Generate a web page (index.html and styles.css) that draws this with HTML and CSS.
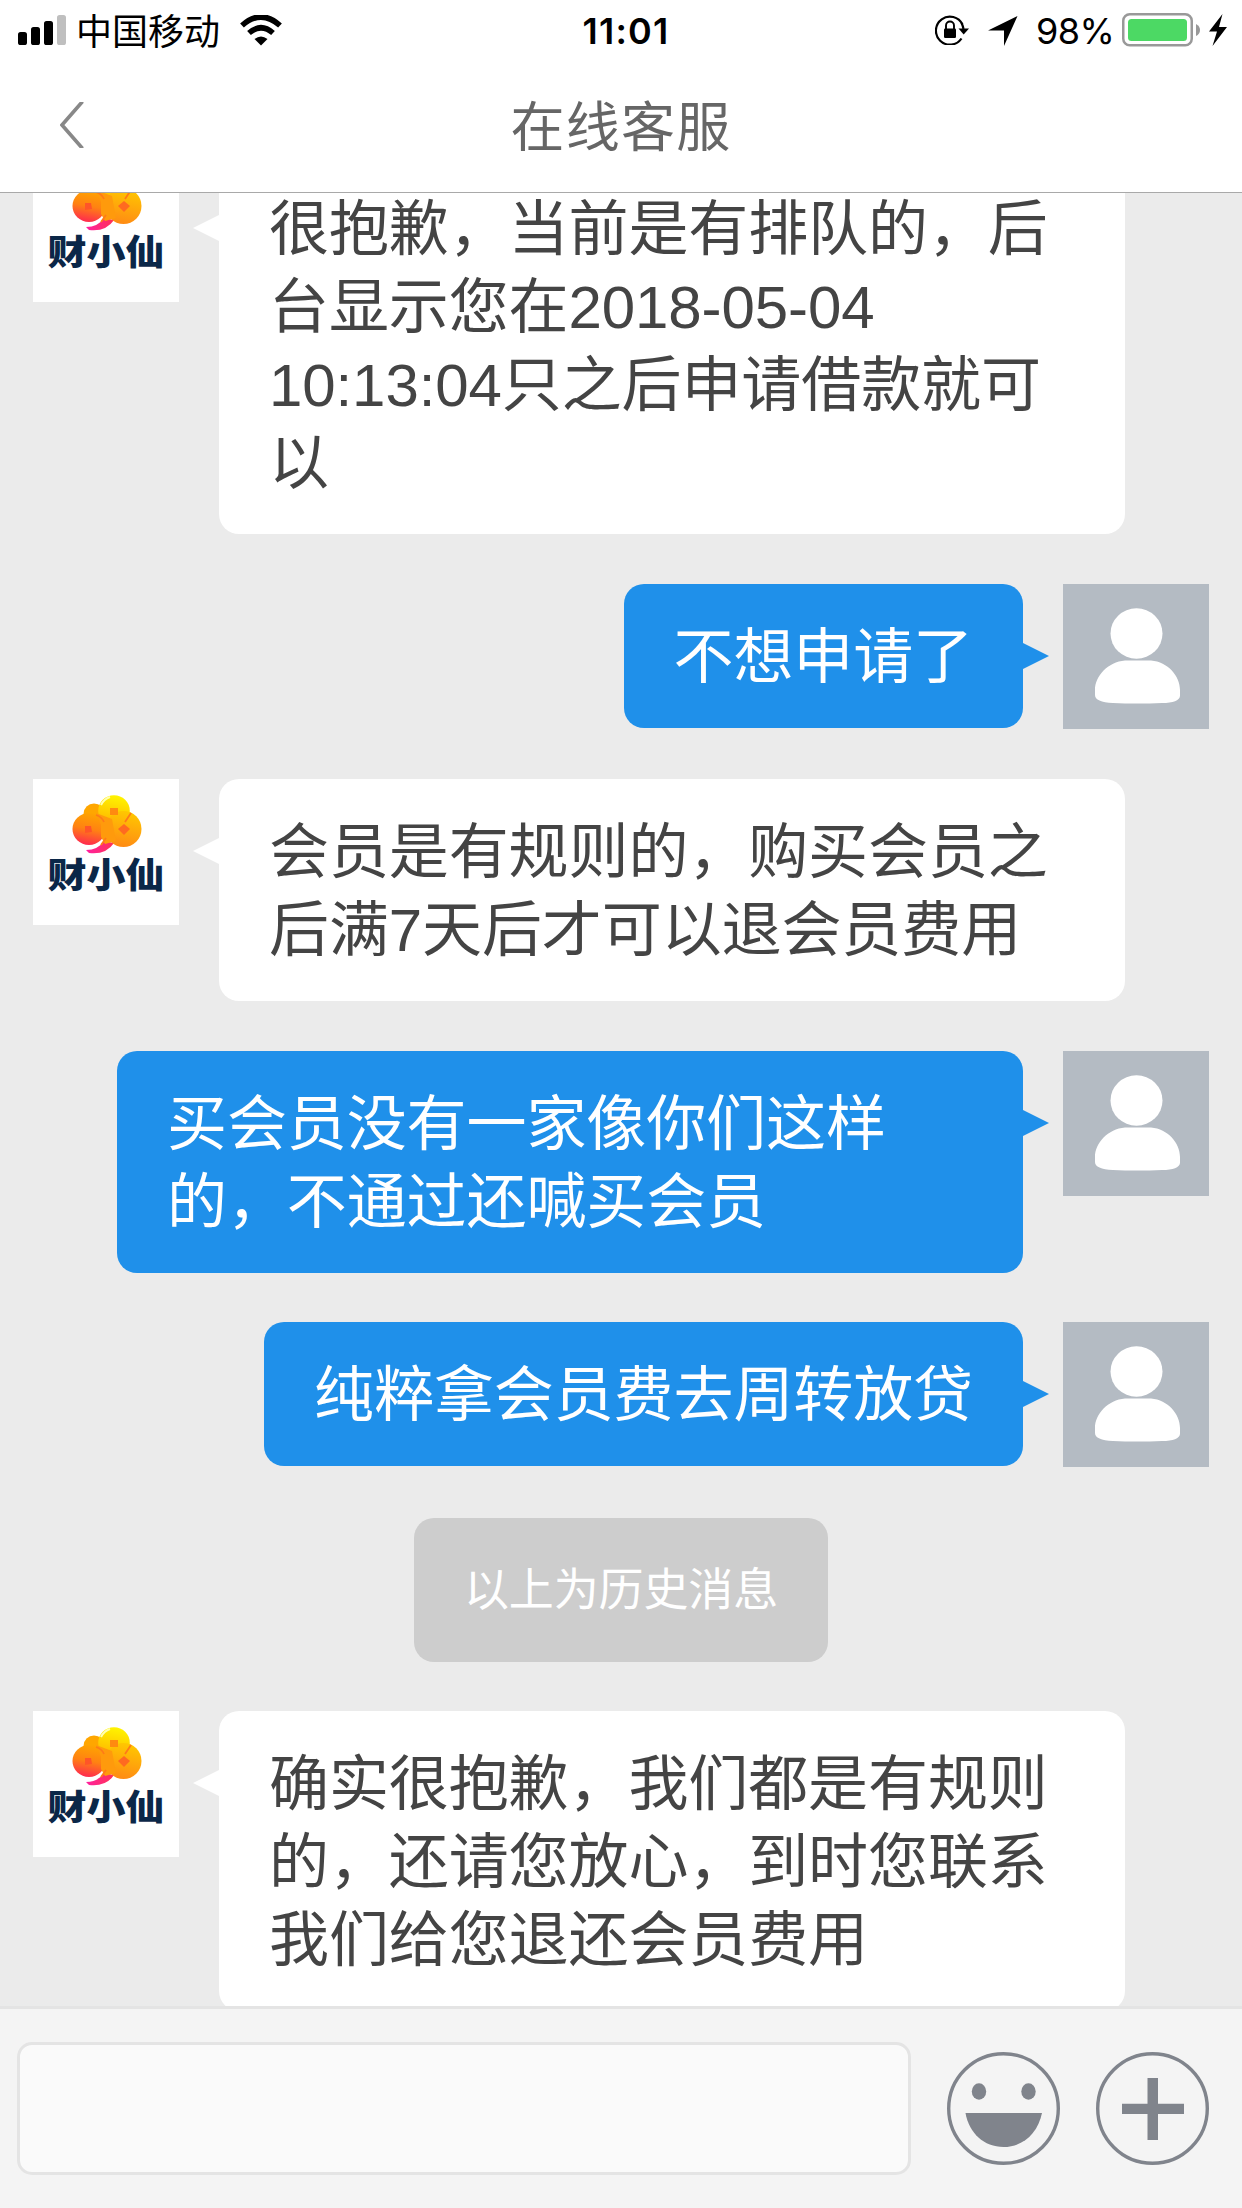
FILE: index.html
```html
<!DOCTYPE html>
<html lang="zh-CN">
<head>
<meta charset="utf-8">
<title>在线客服</title>
<link rel="stylesheet" href="styles.css">
</head>
<body>
<svg class="defs" aria-hidden="true">
  <defs>
    <linearGradient id="tail" x1="0" y1="0" x2="1" y2="0">
      <stop offset="0" stop-color="#ff1fa0"/>
      <stop offset="1" stop-color="#ff3355"/>
    </linearGradient>
    <linearGradient id="puff-left" x1="0.6" y1="0" x2="0.4" y2="1">
      <stop offset="0" stop-color="#ffa500"/>
      <stop offset="0.5" stop-color="#ff8212"/>
      <stop offset="1" stop-color="#ff2850"/>
    </linearGradient>
    <linearGradient id="puff-right" x1="0.6" y1="0" x2="0.4" y2="1">
      <stop offset="0" stop-color="#ffc800"/>
      <stop offset="1" stop-color="#ff8a14"/>
    </linearGradient>
    <linearGradient id="puff-top" x1="0.6" y1="0" x2="0.4" y2="1">
      <stop offset="0" stop-color="#fff500"/>
      <stop offset="1" stop-color="#ffb000"/>
    </linearGradient>
    <symbol id="cloud" viewBox="0 0 70 59">
      <path d="M14 55Q26 55 32 46L42 48Q34 60 17 58Z" fill="url(#tail)"/>
      <circle cx="22" cy="19" r="10.500" fill="#ffa600"/>
      <circle cx="42" cy="16" r="15.800" fill="url(#puff-top)"/>
      <circle cx="51.500" cy="34" r="18" fill="url(#puff-right)"/>
      <ellipse cx="17" cy="34" rx="16.500" ry="16" fill="url(#puff-left)"/>
      <path d="M24 18L40 24L44 46L33 49L29 42V30Z" fill="#ff9a0c"/>
      <path d="M24 20Q30 22 32 27M59 18L53 27M34 43L29 50" fill="none" stroke="#ff7a18" stroke-width="1.800"/>
      <path d="M29 10Q32 4 38 2" fill="none" stroke="#ffffb0" stroke-width="2"/>
      <path d="M38 13H46V20H38Z" fill="#ff8a10"/>
      <path d="M46 34L52 29L58 34L52 40Z" fill="#ff6a20"/>
      <path d="M13 31L19 31L20 37L13 38Z" fill="#ff5528"/>
    </symbol>
    <symbol id="person" viewBox="0 0 146 145">
      <ellipse cx="73.500" cy="49.500" rx="26" ry="25.200" fill="#fff"/>
      <path d="M62 76.500H88C105 78 117 92 117 106V112Q116 119 99 119Q74 120 50 119Q32 118 32 111V106C32 92 45 78 62 76.500Z" fill="#fff"/>
    </symbol>
  </defs>
</svg>
<main class="screen">
  <div class="status">
    <div class="status-left">
      <svg class="signal" width="48" height="30" viewBox="0 0 48 30">
        <rect x="0" y="17" width="9" height="13" rx="2.600"/>
        <rect x="13" y="12" width="9" height="18" rx="2.600"/>
        <rect x="26" y="6" width="9" height="24" rx="2.600"/>
        <rect x="39" y="0" width="9" height="30" rx="2.600" fill="#bfbfbf"/>
      </svg>
      <span class="carrier">中国移动</span>
      <svg class="wifi" width="42" height="31" viewBox="0 0 42 31">
        <path d="M2 10.500Q21 -6.500 40 10.500M9 18Q21 7.500 33 18" fill="none" stroke="#000" stroke-width="5.600"/>
        <path d="M14.500 24Q21 19 27.500 24L21 30.500Z"/>
      </svg>
    </div>
    <div class="time">11:01</div>
    <div class="status-right">
      <svg class="lock" width="34" height="30" viewBox="0 0 34 30">
        <path d="M27.500 9.500A14 14 0 1 0 26.500 23.500" fill="none" stroke="#000" stroke-width="2.200"/>
        <path d="M23.500 13.500H34L28.700 19.500Z"/>
        <path d="M28.500 14Q28 11 26.500 8" fill="none" stroke="#000" stroke-width="2.200"/>
        <rect x="9" y="13.500" width="12" height="9.500" rx="1.200"/>
        <path d="M11 14.500V10.500a4 4 0 0 1 8 0V14.500" fill="none" stroke="#000" stroke-width="1.900"/>
      </svg>
      <svg class="arrow" width="30" height="30" viewBox="0 0 30 30"><path d="M29.500 0L16 30V14.500H0Z"/></svg>
      <span class="percent">98%</span>
      <svg class="battery" width="79" height="34" viewBox="0 0 79 34">
        <rect x="1.250" y="1.250" width="68.500" height="31" rx="6.500" fill="none" stroke="#999" stroke-width="2.500"/>
        <rect x="6" y="6" width="59" height="22" rx="3.500" fill="#4cd964"/>
        <path d="M74 11Q78 13 78 17T74 23Z" fill="#999"/>
      </svg>
      <svg class="bolt" width="18" height="32" viewBox="0 0 18 32"><path d="M13.500 0L0 17.500H8L3.500 32L18 13H10Z"/></svg>
    </div>
  </div>
  <header class="nav">
    <svg class="back" width="24" height="46" viewBox="0 0 24 46"><path d="M22.500 -0.500L2 23L22.500 46.500" fill="none" stroke="#888" stroke-width="3.600"/></svg>
    <h1 class="title">在线客服</h1>
  </header>
  <section class="chat">
    <div class="row">
      <div class="avatar brand"><svg class="cloud" width="70" height="59"><use href="#cloud"/></svg><span class="brand-name">财小仙</span></div>
      <p class="bubble">很抱歉，当前是有排队的，后<br>台显示您在2018-05-04<br>10:13:04只之后申请借款就可<br>以</p>
    </div>
    <div class="row mine">
      <p class="bubble">不想申请了</p>
      <svg class="avatar user"><use href="#person"/></svg>
    </div>
    <div class="row">
      <div class="avatar brand"><svg class="cloud" width="70" height="59"><use href="#cloud"/></svg><span class="brand-name">财小仙</span></div>
      <p class="bubble">会员是有规则的，购买会员之<br>后满7天后才可以退会员费用</p>
    </div>
    <div class="row mine">
      <p class="bubble wide">买会员没有一家像你们这样<br>的，不通过还喊买会员</p>
      <svg class="avatar user"><use href="#person"/></svg>
    </div>
    <div class="row mine last-sent">
      <p class="bubble">纯粹拿会员费去周转放贷</p>
      <svg class="avatar user"><use href="#person"/></svg>
    </div>
    <div class="notice">以上为历史消息</div>
    <div class="row">
      <div class="avatar brand"><svg class="cloud" width="70" height="59"><use href="#cloud"/></svg><span class="brand-name">财小仙</span></div>
      <p class="bubble">确实很抱歉，我们都是有规则<br>的，还请您放心，到时您联系<br>我们给您退还会员费用</p>
    </div>
  </section>
  <footer class="composer">
    <div class="input"></div>
    <svg class="smile" width="113" height="113" viewBox="0 0 113 113">
      <circle cx="56.500" cy="56.500" r="54.800" fill="none" stroke="#80848c" stroke-width="3.400"/>
      <ellipse cx="32" cy="39.500" rx="7.200" ry="8.200" fill="#80848c"/>
      <ellipse cx="81.500" cy="39.500" rx="7.200" ry="8.200" fill="#80848c"/>
      <path d="M18.500 61H95C91 81 76 95 56.500 95S22 81 18.500 61Z" fill="#80848c"/>
    </svg>
    <svg class="plus" width="113" height="113" viewBox="0 0 113 113">
      <circle cx="56.500" cy="56.500" r="54.800" fill="none" stroke="#80848c" stroke-width="3.400"/>
      <path d="M51.500 26H62V51.700H88V62H62V88H51.500V62H26V51.700H51.500Z" fill="#80848c"/>
    </svg>
  </footer>
</main>
</body>
</html>
```
FILE: styles.css
```css
* { box-sizing: border-box; }

body {
  margin: 0;
  font-family: "Liberation Sans", "Noto Sans CJK SC", sans-serif;
}

svg { display: block; flex: none; }

.defs { position: absolute; width: 0; height: 0; }

.screen {
  display: flex;
  flex-direction: column;
  width: 1242px;
  height: 2208px;
  overflow: hidden;
  background: #ebebeb;
}

/* status bar */
.status {
  display: grid;
  grid-template-columns: 1fr auto 1fr;
  flex: none;
  height: 60px;
  background: #fff;
  font-family: "Inter", "Noto Sans CJK SC", sans-serif;
  font-size: 36px;
  line-height: 60px;
  color: #000;
}

.status-left, .status-right { display: flex; }
.status-left { padding-left: 18px; }
.status-right { justify-content: flex-end; padding-right: 15px; }
.signal { margin-top: 15px; }
.carrier { margin: 2px 0 0 10px; width: 146px; white-space: nowrap; }
.wifi { margin: 15px 0 0 18px; }
.time { padding-left: 10px; margin-top: 1px; font-weight: 600; letter-spacing: 1.2px; }
.lock { margin: 15px 19px 0 0; }
.arrow { margin: 16px 18px 0 0; }
.percent { width: 77px; margin: 1px 9px 0 0; letter-spacing: -0.6px; white-space: nowrap; }
.battery { margin: 13px 8px 0 0; }
.bolt { margin-top: 14px; }

/* title bar */
.nav {
  display: grid;
  grid-template-columns: 1fr auto 1fr;
  flex: none;
  height: 133px;
  background: #fff;
  border-bottom: 1px solid #a9a9a9;
}

.back { margin: 42px 0 0 60px; }

.title {
  margin: 28px 0 0;
  font-size: 54px;
  line-height: 80px;
  font-weight: 400;
  letter-spacing: 1.3px;
  color: #666;
}

/* conversation, scrolled so that its first message runs under the title bar */
.chat {
  display: flex;
  flex: 1;
  flex-direction: column;
  justify-content: flex-start;
  gap: 50px;
  min-height: 0;
  padding: 0 33px;
  overflow: hidden;
}

.chat > .row:first-child { margin-top: -37px; }

.row {
  display: flex;
  flex: none;
  align-items: flex-start;
  gap: 40px;
  min-height: 145px;
}

.mine { justify-content: flex-end; }
.chat > .last-sent { min-height: 146px; margin-top: -1px; }

.bubble {
  position: relative;
  width: 906px;
  margin: 0;
  padding: 35px 50px 31px;
  border-radius: 20px;
  background: #fff;
  color: #444;
  font-size: 60px;
  line-height: 78px;
  letter-spacing: -0.1px;
  white-space: nowrap;
}

.bubble::before {
  content: "";
  position: absolute;
  top: 59px;
  left: -26px;
  border: solid transparent;
  border-width: 13px 26px 13px 0;
  border-right-color: #fff;
}

.mine .bubble { width: auto; background: #1f90ea; color: #fff; }
.mine .wide { width: 906px; }

.mine .bubble::before {
  right: -26px;
  left: auto;
  border-width: 13px 0 13px 26px;
  border-left-color: #1f90ea;
}

.avatar { flex: none; width: 146px; height: 146px; margin-bottom: -1px; }

.brand {
  display: flex;
  flex-direction: column;
  align-items: center;
  padding-top: 16px;
  background: #fff;
}

.cloud { margin-left: 2px; }

.brand-name {
  margin-top: 2px;
  color: #0b2748;
  font-size: 39px;
  font-weight: 800;
  line-height: 40px;
  white-space: nowrap;
  transform: scaleY(0.9);
}

.user { height: 145px; margin-bottom: 0; background: #b4bbc3; }

.notice {
  flex: none;
  align-self: center;
  height: 144px;
  margin-bottom: -1px;
  padding: 0 50px;
  border-radius: 20px;
  background: #cdcdcd;
  color: #fff;
  font-size: 45px;
  line-height: 145px;
  letter-spacing: -0.14px;
}

/* message entry */
.composer {
  display: flex;
  flex: none;
  height: 202px;
  padding: 33px 33px 0 17px;
  border-top: 3px solid #e4e4e4;
  background: #f4f4f4;
}

.input {
  width: 894px;
  height: 133px;
  border: 3px solid #e4e4e4;
  border-radius: 15px;
  background: #fafafa;
}

.smile { margin: 10px 0 0 36px; }
.plus { margin: 10px 0 0 36px; }
```
